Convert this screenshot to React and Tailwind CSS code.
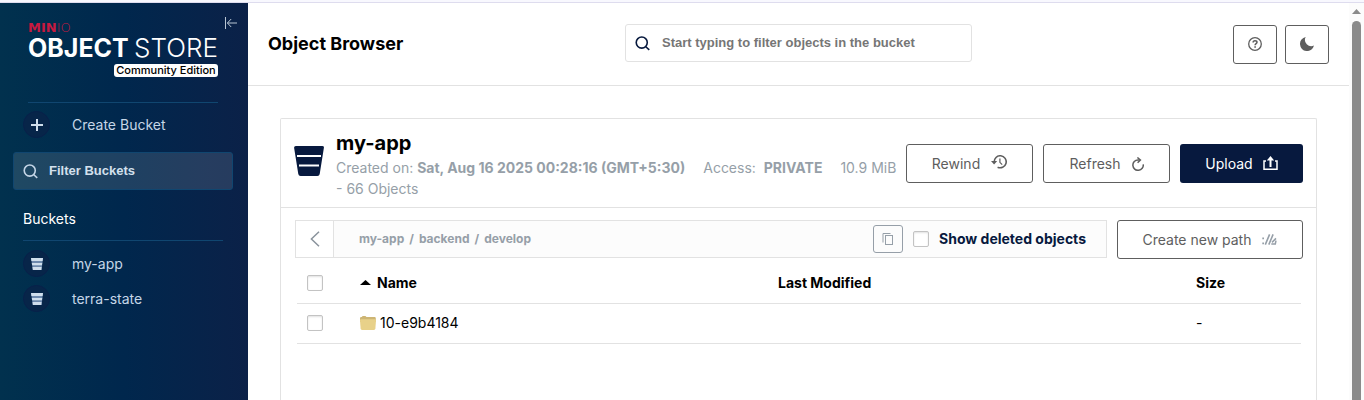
import React from "react";

const objects = [{ name: "10-e9b4184", modified: "", size: "-" }];
const buckets = ["my-app", "terra-state"];

function SearchIcon({ className }) {
  return (
    <svg viewBox="0 0 16 16" className={className} fill="none" stroke="currentColor" strokeWidth="1.7" aria-hidden="true">
      <circle cx="7.2" cy="7" r="5.9" />
      <path d="M11.2 11.2 15.2 14.8" />
    </svg>
  );
}

function BucketIcon({ className }) {
  return (
    <svg viewBox="0 0 30 30" className={className} aria-hidden="true">
      <path d="M1.8 0H28.2Q30.2 0 29.9 1.8L25.7 28Q25.4 30 23.4 30H6.6Q4.6 30 4.3 28L.1 1.8Q0 0 1.8 0Z" fill="currentColor" />
      <path d="M3 9H27V11H3ZM5 18.4H25V20.4H5Z" fill="#fff" />
    </svg>
  );
}

function SmallBucketIcon() {
  return (
    <svg viewBox="0 0 12 12" className="size-3" aria-hidden="true">
      <path d="M0 0H12L10.6 12H1.8Z" fill="#6d88ad" />
      <path d="M0 0H12L11.6 3H.4ZM.8 5H11.2L10.9 7.2H1.2ZM1.5 9H10.6L10.3 12H1.9Z" fill="#cfddec" />
    </svg>
  );
}

function HelpIcon() {
  return (
    <svg viewBox="0 0 14 14" className="size-[14px]" fill="none" stroke="currentColor" aria-hidden="true">
      <circle cx="7" cy="7" r="6.3" strokeWidth="1.3" />
      <path d="M5.1 5.5C5.1 4.3 5.9 3.7 7 3.7S9 4.3 9 5.3C9 6.6 7.1 6.6 7.1 8.2" strokeWidth="1.5" />
      <path d="M6.3 9.2H7.9V10.7H6.3Z" fill="currentColor" stroke="none" />
    </svg>
  );
}

function MoonIcon() {
  return (
    <svg viewBox="0 0 14 14" className="size-[14px]" fill="currentColor" aria-hidden="true">
      <path d="M5.7 0A7.1 7.1 0 1 0 14 8.6 6.3 6.3 0 0 1 5.7 0Z" />
    </svg>
  );
}

function RewindIcon() {
  return (
    <svg viewBox="0 0 16 14" className="mb-1 h-[14px] w-4" fill="none" stroke="currentColor" aria-hidden="true">
      <path d="M3.2 7.2A6 6 0 1 1 6.6 12.2" strokeWidth="1.6" />
      <path d="M0 6H6.2L3.1 9.6Z" fill="currentColor" stroke="none" />
      <path d="M8.9 3.4V7.3L11.2 9.6" strokeWidth="1.2" />
    </svg>
  );
}

function RefreshIcon() {
  return (
    <svg viewBox="0 0 12 14" className="h-[14px] w-3" fill="none" stroke="currentColor" aria-hidden="true">
      <path d="M11.2 7.3A5.2 5.2 0 1 1 6 2.9H8" strokeWidth="1.5" />
      <path d="M5.4 .5 8.4 3 5.6 5.7" strokeWidth="1.5" />
    </svg>
  );
}

function UploadIcon() {
  return (
    <svg viewBox="0 0 15 14" className="mb-[2px] h-[14px] w-[15px]" fill="none" stroke="currentColor" aria-hidden="true">
      <path d="M3 5H1V13.2H14V5H12" strokeWidth="1.5" />
      <path d="M7.5 11V2.5" strokeWidth="2" />
      <path d="M3.8 4.4 7.5 0 11.2 4.4Z" fill="currentColor" stroke="none" />
    </svg>
  );
}

function PathIcon() {
  return (
    <svg viewBox="0 0 15 11" className="h-[11px] w-[15px]" fill="none" stroke="currentColor" aria-hidden="true">
      <path d="M.3 3.5H2V5.2H.3ZM.3 8.5H2V10.2H.3Z" fill="currentColor" stroke="none" />
      <path d="M3.3 10.6 7.6 .4M6.8 10.6 11.1 .4" strokeWidth="1.6" />
      <path d="M14 4.4 10 8.4M9.3 9.9H13.3L14 6.6" strokeWidth="1.5" />
    </svg>
  );
}

function CopyIcon() {
  return (
    <svg viewBox="0 0 12 12" className="size-3" fill="none" stroke="currentColor" aria-hidden="true">
      <rect x="3.5" y="2.5" width="7" height="9" />
      <path d="M1 9.5V.5H8.5" />
    </svg>
  );
}

function FolderIcon() {
  return (
    <svg viewBox="0 0 16 14" className="h-[14px] w-4" aria-hidden="true">
      <path d="M0 2.2Q0 1 1.2 1H1.8Q2 0 3.2 0H5Q6 0 6.4 1H14.6Q15.8 1 15.8 2.2V6H0Z" fill="#cdb574" />
      <path d="M0 4.2Q0 3.2 1 3.2H15Q16 3.2 16 4.2L15.4 12.6Q15.2 14 14 14H2Q.8 14 .6 12.6Z" fill="#e8d189" />
    </svg>
  );
}

function Checkbox(props) {
  return (
    <input
      type="checkbox"
      className="block size-4 shrink-0 appearance-none rounded-[2px] border border-[#c3c3c3] bg-white shadow-[inset_0_1px_2px_rgba(0,0,0,0.12)] checked:bg-[#07193e]"
      {...props}
    />
  );
}

function OutlineButton({ className = "", children, ...rest }) {
  return (
    <button
      type="button"
      className={
        "flex h-[39px] shrink-0 items-center justify-center gap-[11px] rounded-[3px] border border-[#5e5e5e] bg-white text-[#5e5e5e] " +
        className
      }
      {...rest}
    >
      {children}
    </button>
  );
}

function NavCircle({ children }) {
  return (
    <span className="flex size-[27px] items-center justify-center rounded-full border border-[#08204a] bg-[#072549] text-[#cfddec]">
      {children}
    </span>
  );
}

function Sidebar() {
  return (
    <aside className="flex w-[248px] shrink-0 flex-col bg-linear-to-r from-[#01314e] via-[#00274d] to-[#0b2148] text-sm">
      <div className="relative mr-[30px] ml-[28px] h-[100px] border-b border-[#104670] pt-[18px] text-white">
        <div className="flex h-[13px] items-center font-['DejaVu_Sans'] text-[13px] leading-[13px] text-[#c8193f]">
          <span className="font-bold">MIN</span>
          <span className="font-extralight">IO</span>
        </div>
        <div className="flex h-7 items-center justify-between text-[25px] leading-7 whitespace-nowrap">
          <span className="font-bold">OBJECT</span>
          <span className="text-[26px] font-light">STORE</span>
        </div>
        <div className="mt-[2px] ml-auto flex h-[13px] w-[104px] items-center justify-center rounded-[3px] bg-white text-[11px] font-medium whitespace-nowrap text-black">
          Community Edition
        </div>
        <button type="button" aria-label="Collapse menu" className="absolute top-[14px] -right-[19px] text-[#b9c6d4]">
          <svg viewBox="0 0 12 12" className="size-3" fill="none" stroke="currentColor">
            <path d="M.5 0V12M2.5 6H12M6.2 2 2.4 6 6.2 10" />
          </svg>
        </button>
      </div>
      <button type="button" className="mt-2 flex items-center gap-[22px] pl-[23px] text-[#c5d6e7]">
        <NavCircle>
          <svg viewBox="0 0 12 12" className="size-3" stroke="currentColor" strokeWidth="2">
            <path d="M6 0V12M0 6H12" />
          </svg>
        </NavCircle>
        Create Bucket
      </button>
      <label className="mt-[14px] mr-[15px] ml-[13px] flex h-[38px] items-center gap-[11px] rounded-[3px] border border-[#104670] bg-white/12 pl-[9px] text-[#c5d6e7]">
        <SearchIcon className="size-[15px] shrink-0" />
        <input
          type="text"
          aria-label="Filter Buckets"
          placeholder="Filter Buckets"
          className="w-full min-w-0 bg-transparent font-['Liberation_Sans',sans-serif] text-[13px] font-bold outline-none placeholder:text-[#d3e0ed]"
        />
      </label>
      <h2 className="mt-[18px] mr-[25px] ml-[23px] h-[33px] border-b border-[#104670] leading-[22px] text-white">Buckets</h2>
      <ul className="mt-[9px] flex flex-col gap-2">
        {buckets.map((name) => (
          <li key={name}>
            <a href="#" className="flex items-center gap-[22px] pl-[23px] text-[#c5d6e7]">
              <NavCircle>
                <SmallBucketIcon />
              </NavCircle>
              {name}
            </a>
          </li>
        ))}
      </ul>
    </aside>
  );
}

function Header() {
  return (
    <header className="grid h-[83px] shrink-0 grid-cols-[1fr_347px_1fr] items-center border-b border-[#e2e2e2] px-5">
      <h1 className="text-lg font-bold">Object Browser</h1>
      <label className="mb-[2px] flex h-[38px] items-center gap-3 rounded-[3px] border border-[#e2e2e2] pl-[9px] text-[#07193e]">
        <SearchIcon className="size-[15px] shrink-0" />
        <input
          type="text"
          aria-label="Filter objects"
          placeholder="Start typing to filter objects in the bucket"
          className="w-full min-w-0 bg-transparent font-['Liberation_Sans',sans-serif] text-[13px] font-bold outline-none placeholder:text-[#767676]"
        />
      </label>
      <div className="flex justify-end gap-2">
        <OutlineButton className="w-11" aria-label="Help">
          <HelpIcon />
        </OutlineButton>
        <OutlineButton className="w-11" aria-label="Dark mode">
          <MoonIcon />
        </OutlineButton>
      </div>
    </header>
  );
}

function BucketHeader() {
  return (
    <div className="flex items-start gap-2 border-b border-[#e2e2e2] px-[13px] pt-[10px] pb-2">
      <BucketIcon className="mt-[17px] mr-1 size-[30px] shrink-0 text-[#07193e]" />
      <div className="min-w-0 flex-1">
        <h2 className="text-xl leading-7 font-bold">my-app</h2>
        <p className="text-sm leading-[21px] text-[#969fa8]">
          <span className="mr-[18px]">
            Created on: <strong className="font-bold">Sat, Aug 16 2025 00:28:16 (GMT+5:30)</strong>
          </span>
          <span className="mr-[18px]">
            Access: <strong className="ml-1 font-bold">PRIVATE</strong>
          </span>
          <span>10.9 MiB</span> <span className="inline-block">- 66 Objects</span>
        </p>
      </div>
      <div className="mt-[15px] flex shrink-0 gap-[10px] text-sm">
        <OutlineButton className="w-[127px]">
          Rewind <RewindIcon />
        </OutlineButton>
        <OutlineButton className="w-[127px]">
          Refresh <RefreshIcon />
        </OutlineButton>
        <button
          type="button"
          className="flex h-[39px] w-[123px] items-center justify-center gap-[10px] rounded-[3px] bg-[#07193e] text-white"
        >
          Upload <UploadIcon />
        </button>
      </div>
    </div>
  );
}

function PathBar() {
  return (
    <div className="flex gap-[10px] pt-3 pr-[13px] pl-[14px] text-sm">
      <div className="flex h-[38px] flex-1 items-center border border-[#e2e2e2] bg-[#fcfcfc] pr-5">
        <button
          type="button"
          aria-label="Back"
          className="flex h-full w-[38px] items-center justify-center border-r border-[#e2e2e2] bg-white text-[#8a939c]"
        >
          <svg viewBox="0 0 10 16" className="h-4 w-[10px]" fill="none" stroke="currentColor" strokeWidth="1.5">
            <path d="M9 .8 1.4 8 9 15.2" />
          </svg>
        </button>
        <nav aria-label="Path" className="flex flex-1 gap-[5px] pl-[25px] text-xs font-bold text-[#969fa8]">
          <a href="#">my-app</a>
          <span>/</span>
          <a href="#">backend</a>
          <span>/</span>
          <a href="#">develop</a>
        </nav>
        <button
          type="button"
          aria-label="Copy path"
          className="mr-[10px] flex h-7 w-[30px] items-center justify-center rounded-[3px] border border-[#969fa8] text-[#969fa8]"
        >
          <CopyIcon />
        </button>
        <label className="flex items-center gap-[10px] font-bold text-[#07193e]">
          <Checkbox />
          Show deleted objects
        </label>
      </div>
      <OutlineButton className="w-[186px]">
        Create new path
        <span className="text-[#969fa8]">
          <PathIcon />
        </span>
      </OutlineButton>
    </div>
  );
}

function ObjectTable() {
  return (
    <div className="mt-1 pr-[15px] pl-4">
      <table className="w-full table-fixed text-left text-sm">
        <thead>
          <tr className="h-10 border-b border-[#e2e2e2]">
            <th className="w-[63px] pl-[10px]">
              <Checkbox aria-label="Select all" />
            </th>
            <th className="font-bold" aria-sort="ascending">
              <span className="flex items-center gap-[6px]">
                <svg viewBox="0 0 11 5" className="h-[5px] w-[11px]" fill="currentColor" aria-hidden="true">
                  <path d="M0 5 5.5 0 11 5Z" />
                </svg>
                Name
              </span>
            </th>
            <th className="font-bold">Last Modified</th>
            <th className="w-[105px] font-bold">Size</th>
          </tr>
        </thead>
        <tbody>
          {objects.map((o) => (
            <tr key={o.name} className="h-10 border-b border-[#e2e2e2]">
              <td className="pl-[10px]">
                <Checkbox aria-label={"Select " + o.name} />
              </td>
              <td>
                <span className="flex items-center gap-1">
                  <FolderIcon />
                  {o.name}
                </span>
              </td>
              <td>{o.modified}</td>
              <td>{o.size}</td>
            </tr>
          ))}
        </tbody>
      </table>
    </div>
  );
}

export default function App() {
  return (
    <div className="flex h-screen flex-col overflow-hidden bg-white font-['Inter',sans-serif] text-black">
      <div className="h-[3px] shrink-0 border-b border-[#dedcee] bg-[#f8f8fe]" />
      <div className="flex min-h-0 flex-1">
        <Sidebar />
        <div className="flex min-w-0 flex-1 flex-col">
          <Header />
          <main className="flex flex-1 flex-col px-8 pt-8">
            <section className="flex-1 rounded-t-[2px] border border-b-0 border-[#e2e2e2]">
              <BucketHeader />
              <PathBar />
              <ObjectTable />
            </section>
          </main>
        </div>
        <div className="flex w-[15px] shrink-0 flex-col items-center bg-[#fcfcfc] pt-[6px]" aria-hidden="true">
          <svg viewBox="0 0 9 5" className="h-[5px] w-[9px] shrink-0" fill="#8b8b8b">
            <path d="M0 5 4.5 0 9 5Z" />
          </svg>
          <div className="mt-[7px] w-[9px] flex-1 rounded-t-full bg-[#8b8b8b]" />
        </div>
      </div>
    </div>
  );
}
